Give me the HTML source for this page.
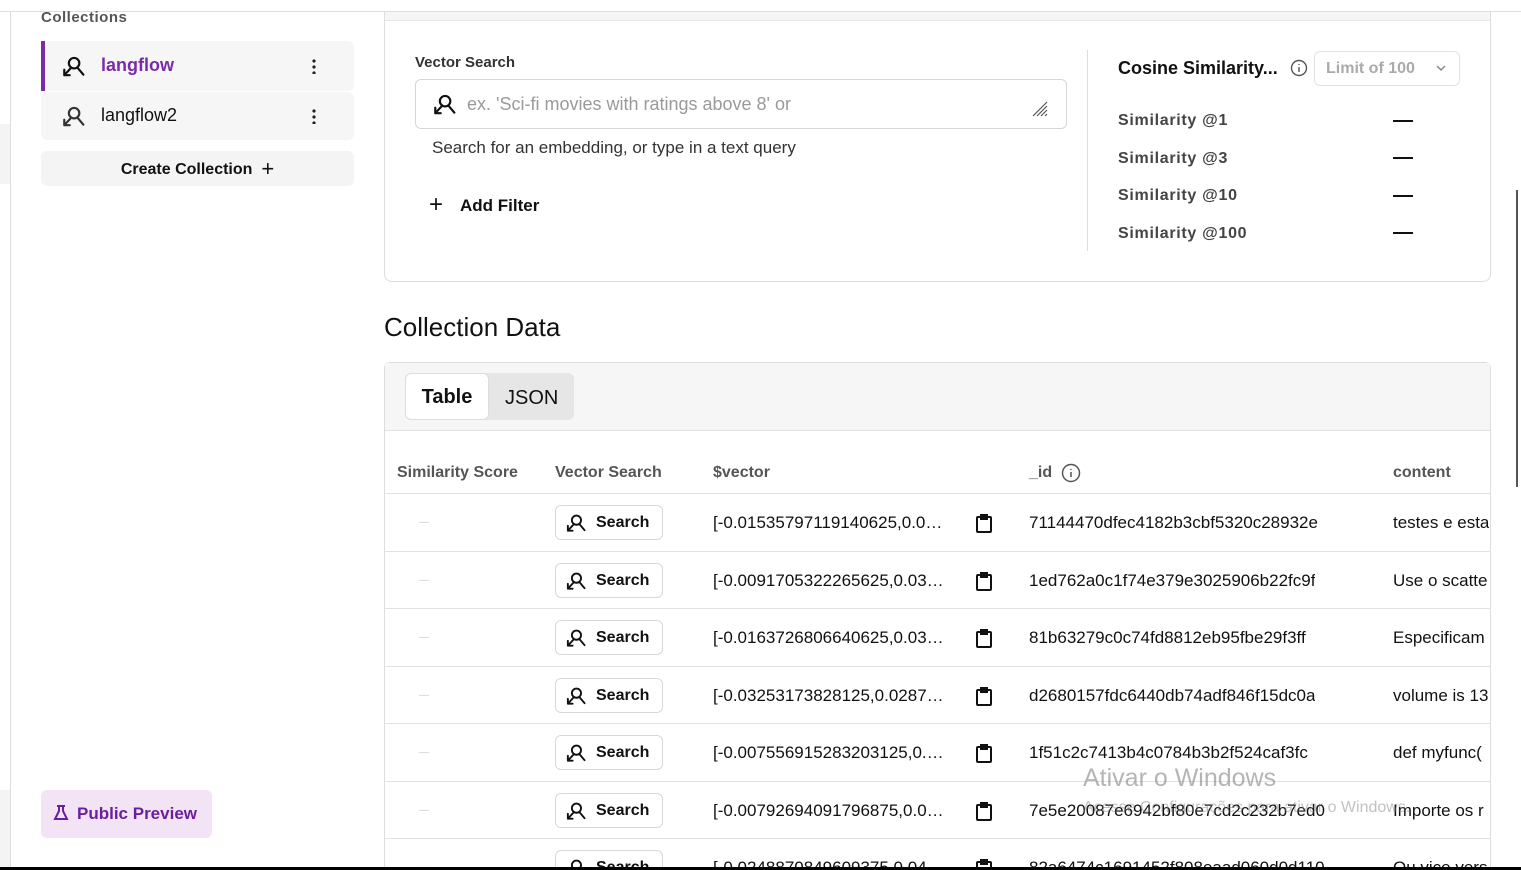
<!DOCTYPE html>
<html style="width:1521px;height:870px;overflow:hidden"><head><meta charset="utf-8"><style>
*{box-sizing:border-box;margin:0;padding:0}
body{width:1521px;height:870px;overflow:hidden;background:#fff;font-family:"Liberation Sans",sans-serif;color:#111;position:relative}
.abs{position:absolute}
.row{position:absolute;left:385px;width:1106px;height:58px;border-bottom:1px solid #e2e2e2}
.row>div{position:absolute;top:0;line-height:57px;font-size:17px;white-space:nowrap;overflow:hidden}
.row>.btn{position:absolute;left:170px;top:11px;width:108px;height:35px;border:1px solid #d8d8d8;border-radius:6px;font-size:16px;font-weight:bold;line-height:33px;padding-left:40px;overflow:visible}
.btn svg{position:absolute;left:9px;top:7px}
.row>.cp{left:590px;top:19px;line-height:0}
</style></head><body>
<svg width="0" height="0" style="position:absolute"><defs><symbol id="vs" viewBox="0 0 22 22"><g fill="none" stroke="currentColor" stroke-width="2" stroke-linecap="round" stroke-linejoin="round"><circle cx="12" cy="7.5" r="4.8"/><path d="M15 11.5l5.5 6.5M9.5 11.5L3 18.5M3 13.5v5h5"/></g></symbol></defs></svg>
<div class="abs" style="left:0;top:11px;width:1521px;height:1px;background:#ddd"></div>
<div class="abs" style="left:10px;top:11px;width:1px;height:859px;background:#ddd"></div>
<div class="abs" style="left:0;top:124px;width:10px;height:60px;background:#f4f4f4"></div>
<div class="abs" style="left:0;top:790px;width:10px;height:80px;background:#f4f4f4"></div>
<div class="abs" style="left:41px;top:9px;font-size:15px;font-weight:bold;color:#555;letter-spacing:.5px">Collections</div>
<div class="abs" style="left:41px;top:41px;width:313px;height:50px;background:#f6f6f6;border-radius:0 6px 6px 0;border-left:4px solid #7a2ba6"></div>
<svg class="abs" style="left:61px;top:55px;color:#111" width="24" height="24"><use href="#vs"/></svg>
<div class="abs" style="left:101px;top:55px;font-size:18px;font-weight:bold;color:#7a2ba6">langflow</div>
<div class="abs" style="left:312px;top:58px;width:4px;height:16px;background:radial-gradient(circle,#222 1.6px,transparent 1.8px) 0 0/4px 6px"></div>
<div class="abs" style="left:41px;top:92px;width:313px;height:48px;background:#f6f6f6;border-radius:6px"></div>
<svg class="abs" style="left:61px;top:105px;color:#333" width="24" height="24"><use href="#vs"/></svg>
<div class="abs" style="left:101px;top:105px;font-size:18px">langflow2</div>
<div class="abs" style="left:312px;top:108px;width:4px;height:16px;background:radial-gradient(circle,#222 1.6px,transparent 1.8px) 0 0/4px 6px"></div>
<div class="abs" style="left:41px;top:151px;width:313px;height:35px;background:#f4f4f4;border-radius:6px;text-align:center;line-height:35px;font-size:16px;font-weight:bold">Create Collection &nbsp;<span style="font-size:22px;font-weight:normal;vertical-align:-2px">+</span></div>
<div class="abs" style="left:41px;top:790px;width:171px;height:48px;background:#f3e4f5;border-radius:6px;color:#6a1fa0;font-weight:bold;font-size:17px;line-height:48px;padding-left:36px">Public Preview</div>
<svg class="abs" style="left:53px;top:804px" width="16" height="18" viewBox="0 0 16 18" fill="none" stroke="#6a1fa0" stroke-width="2"><path d="M4 2h8M6 2v5L2 15h12L10 7V2"/></svg>

<div class="abs" style="left:384px;top:11px;width:1107px;height:271px;border:1px solid #ddd;border-top:none;border-radius:0 0 8px 8px"></div>
<div class="abs" style="left:385px;top:12px;width:1105px;height:9px;background:#f6f6f6;border-bottom:1px solid #e6e6e6"></div>
<div class="abs" style="left:415px;top:54px;font-size:15px;font-weight:bold;color:#333">Vector Search</div>
<div class="abs" style="left:415px;top:79px;width:652px;height:50px;border:1px solid #d6d6d6;border-radius:6px"></div>
<svg class="abs" style="left:432px;top:93px;color:#111" width="24" height="24"><use href="#vs"/></svg>
<div class="abs" style="left:467px;top:94px;font-size:18px;color:#9a9a9a">ex. 'Sci-fi movies with ratings above 8' or</div>
<svg class="abs" style="left:1031px;top:100px" width="18" height="18" viewBox="0 0 18 18" stroke="#555" stroke-width="1.2"><path d="M2 16L16 2M6 16L16 6M10 16l6-6M14 16l2-2"/></svg>
<div class="abs" style="left:432px;top:138px;font-size:17px;color:#333">Search for an embedding, or type in a text query</div>
<div class="abs" style="left:429px;top:192px;font-size:24px;line-height:26px">+</div>
<div class="abs" style="left:460px;top:196px;font-size:17px;font-weight:bold">Add Filter</div>
<div class="abs" style="left:1087px;top:50px;width:1px;height:201px;background:#ddd"></div>
<div class="abs" style="left:1118px;top:58px;font-size:18px;font-weight:bold">Cosine Similarity...</div>
<svg class="abs" style="left:1290px;top:59px" width="18" height="18" viewBox="0 0 18 18" fill="none" stroke="#555" stroke-width="1.4"><circle cx="9" cy="9" r="7.5"/><path d="M9 8v5M9 5v1"/></svg>
<div class="abs" style="left:1314px;top:51px;width:146px;height:35px;border:1px solid #e2e2e2;border-radius:6px;font-size:16px;color:#aaa;line-height:33px;padding-left:11px;font-weight:bold">Limit of 100</div>
<svg class="abs" style="left:1435px;top:64px" width="12" height="8" viewBox="0 0 12 8" fill="none" stroke="#888" stroke-width="1.5"><path d="M2 2l4 4 4-4"/></svg>
<div class="abs" style="left:1118px;top:111px;font-size:16px;font-weight:bold;color:#444;line-height:20px;letter-spacing:.7px">Similarity @1<br><div style="height:18px"></div>Similarity @3<br><div style="height:17px"></div>Similarity @10<br><div style="height:18px"></div>Similarity @100</div>
<div class="abs" style="left:1393px;top:120px;width:20px;height:2px;background:#111"></div>
<div class="abs" style="left:1393px;top:157px;width:20px;height:2px;background:#111"></div>
<div class="abs" style="left:1393px;top:195px;width:20px;height:2px;background:#111"></div>
<div class="abs" style="left:1393px;top:232px;width:20px;height:2px;background:#111"></div>

<div class="abs" style="left:384px;top:312px;font-size:26px;color:#111">Collection Data</div>
<div class="abs" style="left:384px;top:362px;width:1107px;height:508px;border:1px solid #ddd;border-bottom:none;border-radius:6px 6px 0 0"></div>
<div class="abs" style="left:385px;top:363px;width:1105px;height:68px;background:#f6f6f6;border-bottom:1px solid #e2e2e2"></div>
<div class="abs" style="left:405px;top:373px;width:169px;height:47px;background:#e6e6e6;border-radius:6px"></div>
<div class="abs" style="left:405px;top:373px;width:84px;height:47px;background:#fff;border:1px solid #ddd;border-radius:6px;text-align:center;line-height:47px;font-size:20px;font-weight:bold">Table</div>
<div class="abs" style="left:505px;top:387px;font-size:20px">JSON</div>
<div class="abs" style="left:385px;top:431px;width:1105px;height:63px;border-bottom:1px solid #e2e2e2;font-size:16px;font-weight:bold;color:#555">
<span class="abs" style="left:12px;top:33px">Similarity Score</span><span class="abs" style="left:170px;top:33px">Vector Search</span><span class="abs" style="left:328px;top:33px">$vector</span><span class="abs" style="left:644px;top:33px">_id</span><svg class="abs" style="left:676px;top:32px" width="20" height="20" viewBox="0 0 20 20" fill="none" stroke="#555" stroke-width="1.5"><circle cx="10" cy="10" r="8.5"/><path d="M10 9v5M10 6v1"/></svg><span class="abs" style="left:1008px;top:33px">content</span></div>

<div class="row" style="top:494px"><div style="left:34px;color:#ccc;font-size:10px">—</div><div class="btn"><svg width="21" height="21"><use href="#vs"/></svg>Search</div><div style="left:328px">[-0.01535797119140625,0.0…</div><div class="cp"><svg width="18" height="20" viewBox="0 0 18 20" fill="none" stroke="#111" stroke-width="2"><rect x="2" y="4" width="14" height="15" rx="1"/><path d="M6 2h6v4H6z"/></svg></div><div style="left:644px">71144470dfec4182b3cbf5320c28932e</div><div style="left:1008px">testes e esta</div></div>
<div class="row" style="top:552px;height:57px"><div style="left:34px;color:#ccc;font-size:10px">—</div><div class="btn"><svg width="21" height="21"><use href="#vs"/></svg>Search</div><div style="left:328px">[-0.0091705322265625,0.03…</div><div class="cp"><svg width="18" height="20" viewBox="0 0 18 20" fill="none" stroke="#111" stroke-width="2"><rect x="2" y="4" width="14" height="15" rx="1"/><path d="M6 2h6v4H6z"/></svg></div><div style="left:644px">1ed762a0c1f74e379e3025906b22fc9f</div><div style="left:1008px">Use o scatte</div></div>
<div class="row" style="top:609px"><div style="left:34px;color:#ccc;font-size:10px">—</div><div class="btn"><svg width="21" height="21"><use href="#vs"/></svg>Search</div><div style="left:328px">[-0.0163726806640625,0.03…</div><div class="cp"><svg width="18" height="20" viewBox="0 0 18 20" fill="none" stroke="#111" stroke-width="2"><rect x="2" y="4" width="14" height="15" rx="1"/><path d="M6 2h6v4H6z"/></svg></div><div style="left:644px">81b63279c0c74fd8812eb95fbe29f3ff</div><div style="left:1008px">Especificam</div></div>
<div class="row" style="top:667px;height:57px"><div style="left:34px;color:#ccc;font-size:10px">—</div><div class="btn"><svg width="21" height="21"><use href="#vs"/></svg>Search</div><div style="left:328px">[-0.03253173828125,0.0287…</div><div class="cp"><svg width="18" height="20" viewBox="0 0 18 20" fill="none" stroke="#111" stroke-width="2"><rect x="2" y="4" width="14" height="15" rx="1"/><path d="M6 2h6v4H6z"/></svg></div><div style="left:644px">d2680157fdc6440db74adf846f15dc0a</div><div style="left:1008px">volume is 13</div></div>
<div class="row" style="top:724px"><div style="left:34px;color:#ccc;font-size:10px">—</div><div class="btn"><svg width="21" height="21"><use href="#vs"/></svg>Search</div><div style="left:328px">[-0.007556915283203125,0.…</div><div class="cp"><svg width="18" height="20" viewBox="0 0 18 20" fill="none" stroke="#111" stroke-width="2"><rect x="2" y="4" width="14" height="15" rx="1"/><path d="M6 2h6v4H6z"/></svg></div><div style="left:644px">1f51c2c7413b4c0784b3b2f524caf3fc</div><div style="left:1008px">def myfunc(</div></div>
<div class="row" style="top:782px;height:57px"><div style="left:34px;color:#ccc;font-size:10px">—</div><div class="btn"><svg width="21" height="21"><use href="#vs"/></svg>Search</div><div style="left:328px">[-0.00792694091796875,0.0…</div><div class="cp"><svg width="18" height="20" viewBox="0 0 18 20" fill="none" stroke="#111" stroke-width="2"><rect x="2" y="4" width="14" height="15" rx="1"/><path d="M6 2h6v4H6z"/></svg></div><div style="left:644px">7e5e20087e6942bf80e7cd2c232b7ed0</div><div style="left:1008px">Importe os r</div></div>
<div class="row" style="top:839px;height:31px;border:none;overflow:hidden"><div style="left:34px;color:#ccc;font-size:10px">—</div><div class="btn"><svg width="21" height="21"><use href="#vs"/></svg>Search</div><div style="left:328px">[-0.0248870849609375,0.04…</div><div class="cp"><svg width="18" height="20" viewBox="0 0 18 20" fill="none" stroke="#111" stroke-width="2"><rect x="2" y="4" width="14" height="15" rx="1"/><path d="M6 2h6v4H6z"/></svg></div><div style="left:644px">82a6474c1691452f808eaad060d0d110</div><div style="left:1008px">Ou vice vers</div></div>

<div class="abs" style="left:1083px;top:764px;font-size:25px;color:rgba(120,120,120,.55)">Ativar o Windows</div>
<div class="abs" style="left:1083px;top:799px;font-size:16px;color:rgba(120,120,120,.45)">Acesse Configurações para ativar o Windows.</div>
<div class="abs" style="left:1516px;top:190px;width:2px;height:297px;background:#555"></div>
<div class="abs" style="left:0;top:867px;width:1521px;height:3px;background:#000"></div>
</body></html>
